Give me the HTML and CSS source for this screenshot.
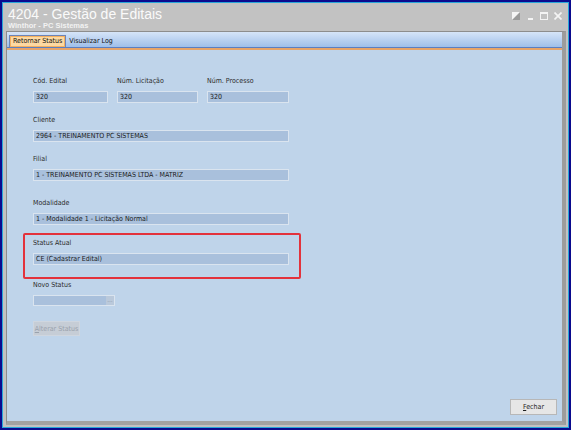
FILE: index.html
```html
<!DOCTYPE html>
<html lang="pt-BR">
<head>
    <meta charset="UTF-8">
    <title>4204 - Gestão de Editais</title>
    <link rel="stylesheet" href="styles.css">
</head>
<body>
<div class="window">
    <div class="frame">
        <div class="titlebar">
            <div class="titles">
                <h1>4204 - Gestão de Editais</h1>
                <p>Winthor - PC Sistemas</p>
            </div>
            <div class="controls">
                <svg width="8" height="8" viewBox="0 0 8 8"><rect x="0" y="0" width="8" height="8" fill="#f4f4f4"/><path d="M8 0 L0 8 L8 8 Z" fill="#9a9a9a"/></svg>
                <svg width="8" height="8" viewBox="0 0 8 8"><rect x="2" y="6" width="5" height="2" fill="#f4f4f4"/></svg>
                <svg width="8" height="8" viewBox="0 0 8 8"><rect x="0.5" y="0.5" width="7" height="7" fill="none" stroke="#f4f4f4"/><rect x="0" y="0" width="8" height="2" fill="#f4f4f4"/></svg>
                <svg width="8" height="8" viewBox="0 0 8 8"><path d="M0.5 0.5 L7.5 7.5 M7.5 0.5 L0.5 7.5" stroke="#f4f4f4" stroke-width="1.7"/></svg>
            </div>
        </div>

        <div class="panel">
            <div class="tabs">
                <span class="tab active">Retornar Status</span>
                <span class="tab">Visualizar Log</span>
            </div>

            <div class="content">
                <div class="row">
                    <div class="field w-cod">
                        <label>Cód. Edital</label>
                        <div class="input">320</div>
                    </div>
                    <div class="field w-lic">
                        <label>Núm. Licitação</label>
                        <div class="input">320</div>
                    </div>
                    <div class="field w-proc">
                        <label>Núm. Processo</label>
                        <div class="input">320</div>
                    </div>
                </div>

                <div class="field wide">
                    <label>Cliente</label>
                    <div class="input">2964 - TREINAMENTO PC SISTEMAS</div>
                </div>

                <div class="field wide filial">
                    <label>Filial</label>
                    <div class="input">1 - TREINAMENTO PC SISTEMAS LTDA - MATRIZ</div>
                </div>

                <div class="field wide modalidade">
                    <label>Modalidade</label>
                    <div class="input">1 - Modalidade 1 - Licitação Normal</div>
                </div>

                <div class="highlight">
                    <div class="field wide">
                        <label>Status Atual</label>
                        <div class="input">CE (Cadastrar Edital)</div>
                    </div>
                </div>

                <div class="field">
                    <label>Novo Status</label>
                    <div class="combo"><span class="combo-btn">…</span></div>
                </div>

                <button class="btn disabled"><u>A</u>lterar Status</button>

                <div class="footer">
                    <button class="btn"><u>F</u>echar</button>
                </div>
            </div>
        </div>
    </div>
</div>
</body>
</html>
```

FILE: styles.css
```css
* {
    box-sizing: border-box;
}

body {
    margin: 0;
    font-family: "DejaVu Sans Condensed", "DejaVu Sans", Tahoma, sans-serif;
    font-stretch: condensed;
}

.window {
    width: 571px;
    height: 430px;
    border: 2px solid #0a0a8e;
    background: #c2c2c2;
}

.frame {
    height: 100%;
    border: 1px solid #29a6d9;
    display: flex;
    flex-direction: column;
}

/* title area */
.titlebar {
    height: 28px;
    display: flex;
    justify-content: space-between;
    padding: 4px 6px 0 5px;
}

.titlebar h1 {
    margin: 0;
    font-family: "Liberation Sans", Arial, sans-serif;
    font-weight: normal;
    font-size: 14px;
    line-height: 15px;
    color: #fafafa;
}

.titlebar p {
    margin: 0;
    font-family: "Liberation Sans", Arial, sans-serif;
    font-weight: bold;
    font-size: 7.5px;
    line-height: 8px;
    color: #f2f2f2;
}

.controls {
    display: flex;
    gap: 6px;
    padding-top: 5px;
}

/* tab page */
.panel {
    flex: 1;
    margin: 0 2px 2px 3px;
    border: 1px solid #8d8d8d;
    border-right: 4px solid #9c9c9c;
    border-bottom: 4px solid #a2a2a2;
    display: flex;
    flex-direction: column;
}

.tabs {
    height: 16px;
    padding: 2px 0 0 2px;
    background: linear-gradient(#d6e5f8, #9fbfea);
    border-bottom: 1px solid #5b7fc2;
    display: flex;
    align-items: flex-end;
    font-size: 7px;
    color: #111;
}

.tab {
    padding: 1px 3px 2px;
}

.tab.active {
    background: #fdd9a2;
    border: 1px solid #6c84b8;
    border-bottom: none;
    box-shadow: inset 0 0 0 1px #f3b060;
}

.content {
    flex: 1;
    background: #bfd4ea;
    border-top: 2px solid #e6a46a;
    padding: 26px 0 0 26px;
    font-size: 7px;
    color: #2b2b2b;
    display: flex;
    flex-direction: column;
}

.row {
    display: flex;
    gap: 9px;
    margin-bottom: 12px;
}

.field label {
    display: block;
    height: 10px;
    line-height: 10px;
    margin-bottom: 5px;
    white-space: nowrap;
}

.input {
    height: 12px;
    line-height: 10px;
    padding: 0 2px;
    background: #a9c0dc;
    border: 1px solid #dae4ef;
    color: #1a1a1a;
    white-space: nowrap;
}

.w-cod { width: 75px; }
.w-lic { width: 81px; }
.w-proc { width: 82px; }

.wide {
    width: 256px;
    margin-bottom: 12px;
}

.filial {
    margin-bottom: 17px;
}

.modalidade {
    margin-bottom: 8px;
}

/* red frame round the current status */
.highlight {
    margin-left: -10px;
    width: 278px;
    height: 46px;
    border: 2px solid #e3323c;
    border-radius: 2px;
    padding: 3px 0 0 8px;
    margin-bottom: 1px;
}

.highlight .field.wide {
    margin-bottom: 0;
}

.combo {
    width: 82px;
    height: 11px;
    background: #a9c0dc;
    border: 1px solid #dae4ef;
    display: flex;
    justify-content: flex-end;
}

.combo-btn {
    width: 8px;
    background: #bac9db;
    color: #8a96a6;
    font-size: 6px;
    line-height: 7px;
    text-align: center;
}

.btn {
    font-family: inherit;
    font-stretch: condensed;
    font-size: 7px;
    height: 15px;
    padding: 0;
    background: #e6e6e6;
    border: 1px solid #b7b7b7;
    color: #1e1e1e;
    white-space: nowrap;
}

.btn.disabled {
    margin-top: 15px;
    width: 47px;
    background: #c6cdd6;
    border-color: #cfd6df;
    color: #9aa2ad;
    align-self: flex-start;
}

.footer {
    margin-top: auto;
    padding: 0 5px 6px 0;
    display: flex;
    justify-content: flex-end;
}

.footer .btn {
    width: 47px;
    height: 16px;
}
```
